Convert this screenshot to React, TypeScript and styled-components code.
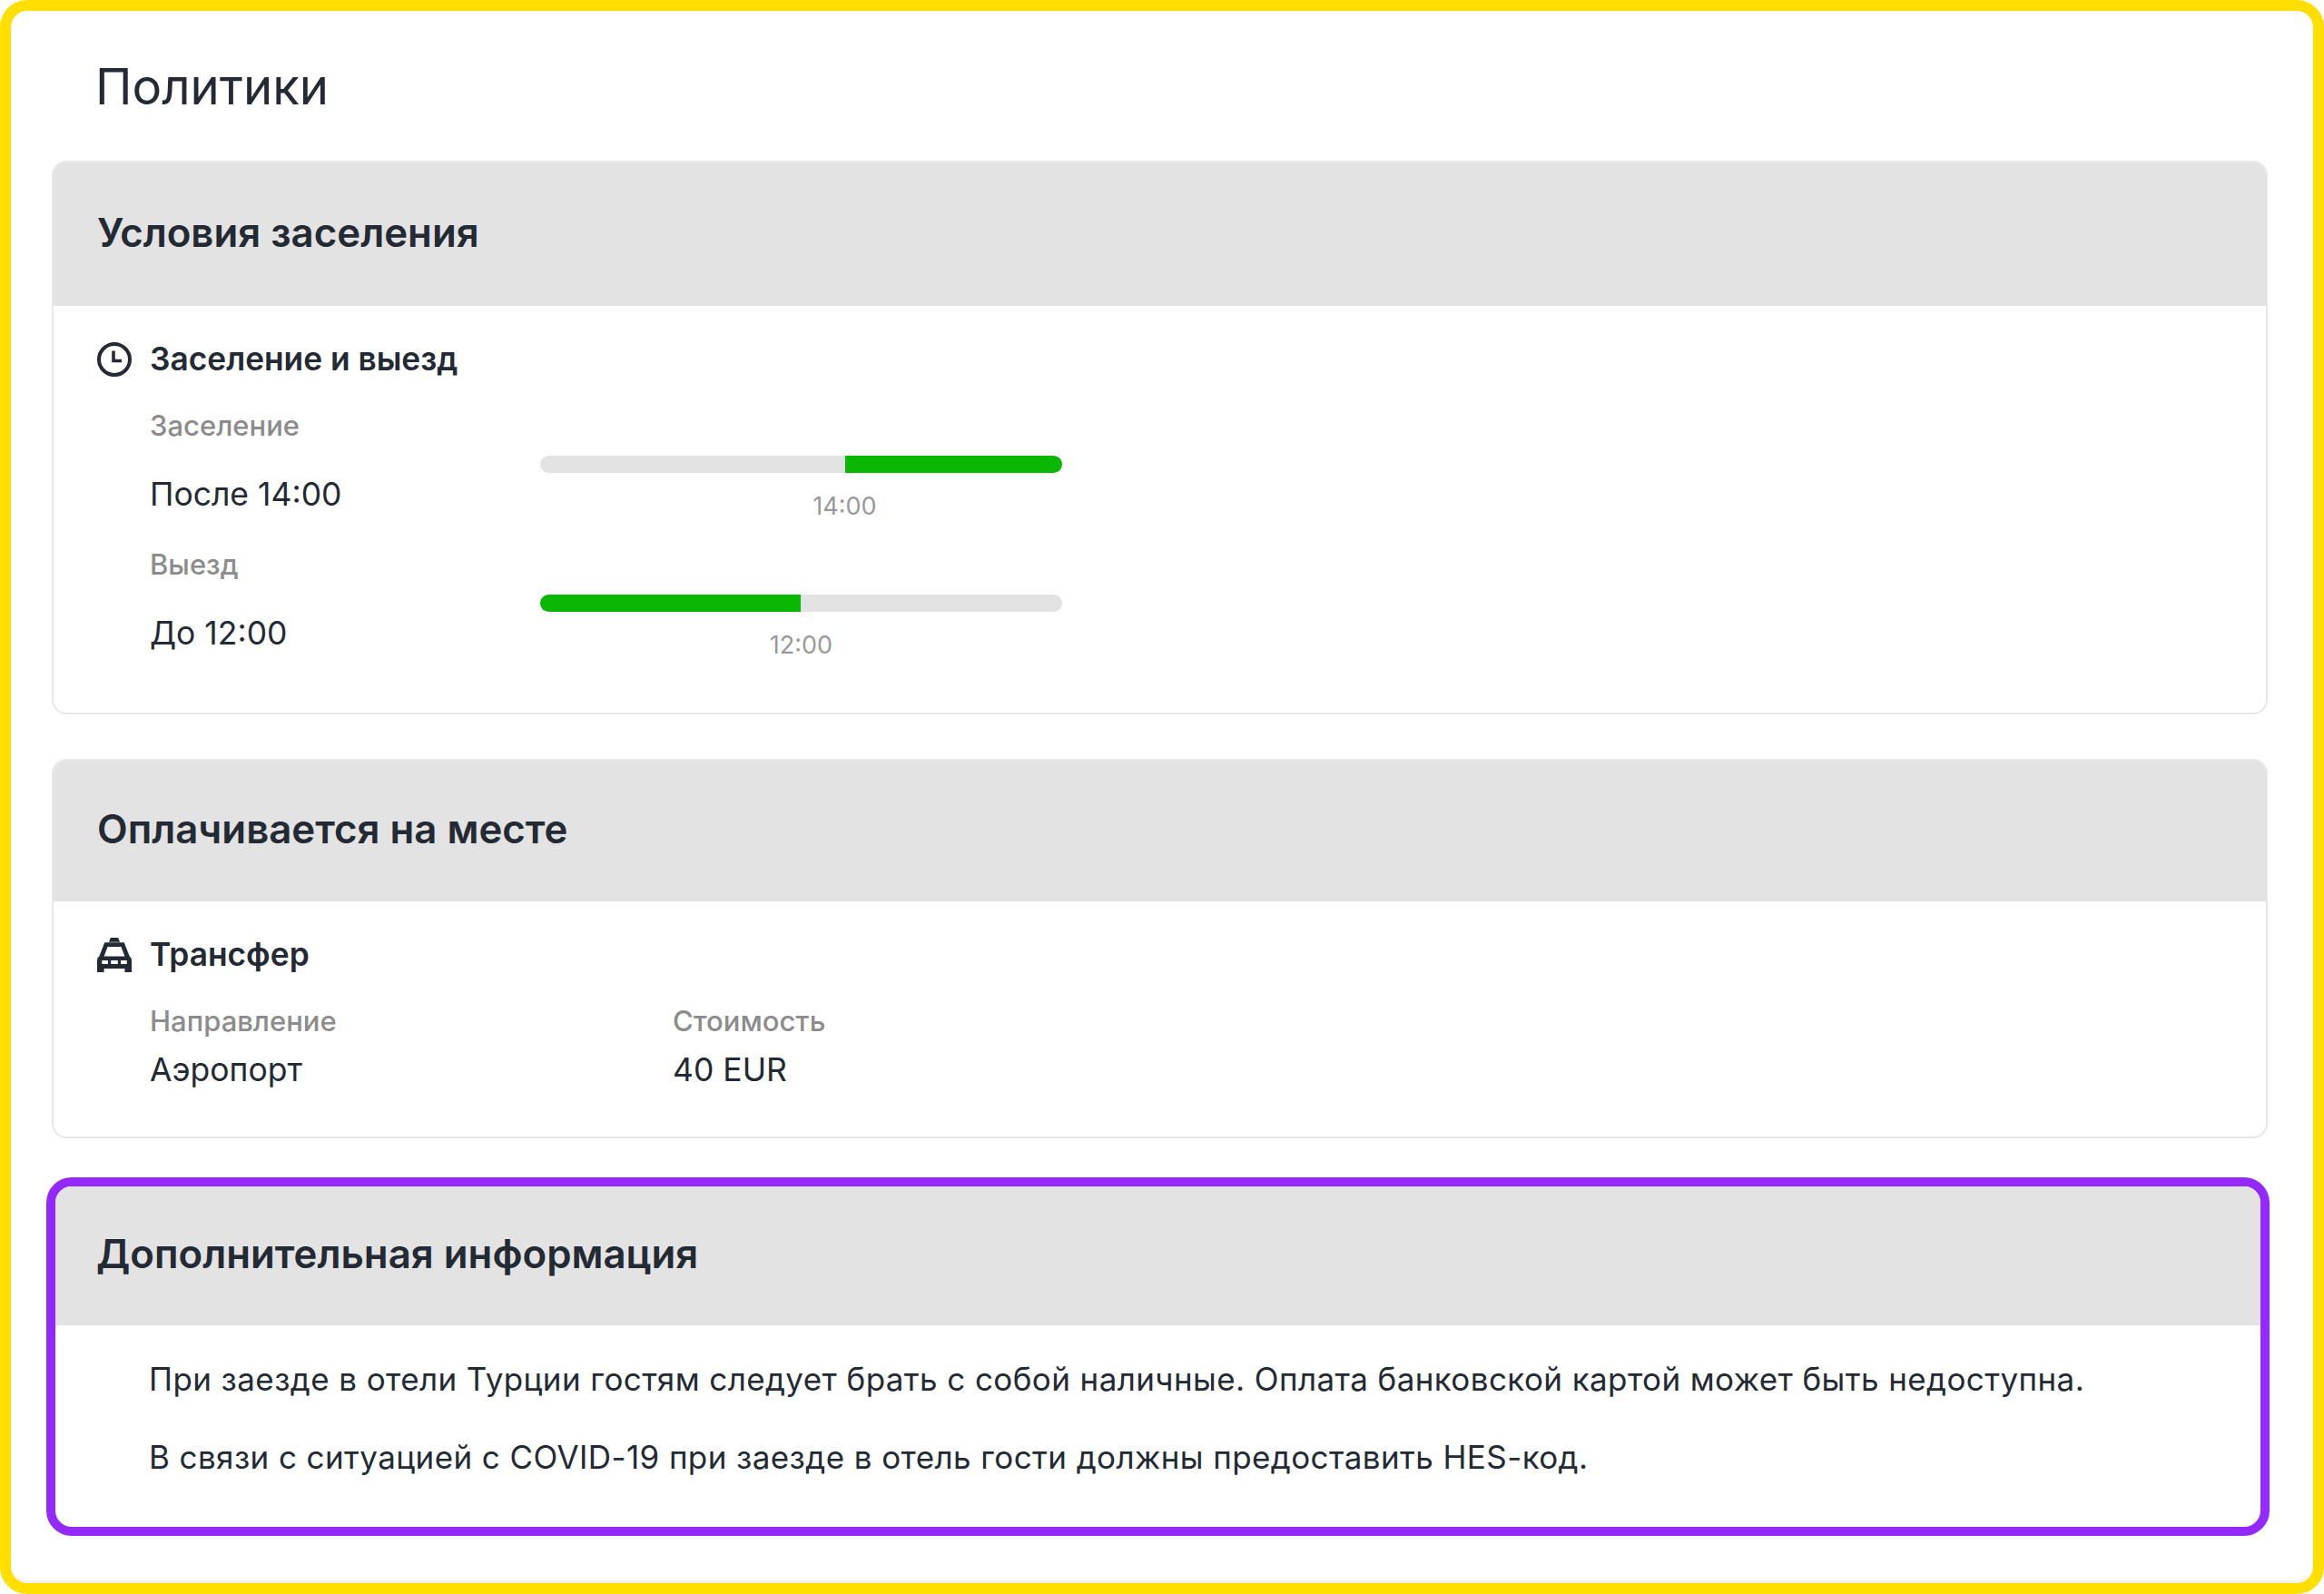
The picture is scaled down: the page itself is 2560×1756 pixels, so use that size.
import React from 'react';
import styled, { createGlobalStyle } from 'styled-components';

const GlobalStyle = createGlobalStyle`
  html, body {
    margin: 0;
    padding: 0;
    background: #fff;
  }
  * {
    box-sizing: border-box;
  }
`;

const Frame = styled.div`
  width: 2560px;
  height: 1756px;
  padding: 53px 50px 0 45px;
  border: 12px solid #ffde00;
  border-radius: 30px;
  background: #fff;
  box-shadow: inset 0 -5px 4px -2px #eeeeee;
  font-family: Inter, "Noto Sans", sans-serif;
  color: #242a33;
`;

const PageTitle = styled.h1`
  margin: 0 0 52px 48px;
  font-size: 54.5px;
  line-height: 60px;
  font-weight: 400;
`;

const Card = styled.section<{ $height: number; $gap: number }>`
  height: ${(p) => p.$height}px;
  margin-bottom: ${(p) => p.$gap}px;
  border: 2px solid #e8e8e8;
  border-radius: 16px;
  overflow: hidden;
`;

const HighlightCard = styled.section`
  height: 395px;
  margin: 0 -2px 0 -6px;
  border: 10px solid #9429ff;
  border-radius: 28px;
  overflow: hidden;
`;

const CardHeader = styled.div<{ $height: number; $pad: number }>`
  display: flex;
  align-items: center;
  height: ${(p) => p.$height}px;
  padding-bottom: 3px;
  padding-left: ${(p) => p.$pad}px;
  background: #e3e3e3;
`;

const CardTitle = styled.h2`
  margin: 0;
  font-size: 43.8px;
  line-height: 52px;
  font-weight: 600;
`;

const CardBody = styled.div`
  padding: 38px 48px 0;
`;

const SectionHead = styled.div`
  display: flex;
  align-items: center;
  gap: 20px;
  height: 42px;
  margin-bottom: 34px;
`;

const SectionTitle = styled.h3`
  margin: 0;
  font-size: 35.3px;
  line-height: 42px;
  font-weight: 600;
`;

const Details = styled.div`
  padding-left: 58px;
`;

const TimeRow = styled.div`
  display: grid;
  grid-template-columns: 430px 575px;
  height: 153px;
`;

const Label = styled.div`
  font-size: 31px;
  line-height: 36px;
  font-weight: 500;
  color: #8c8c8c;
`;

const Value = styled.div<{ $top: number }>`
  margin-top: ${(p) => p.$top}px;
  font-size: 35.5px;
  line-height: 44px;
  font-weight: 400;
`;

const BarColumn = styled.div`
  padding-top: 51px;
`;

const Track = styled.div<{ $flip?: boolean }>`
  display: flex;
  justify-content: ${(p) => (p.$flip ? 'flex-end' : 'flex-start')};
  height: 19px;
  border-radius: 10px;
  background: #e3e3e3;
  overflow: hidden;
`;

const Fill = styled.div`
  height: 100%;
  background: #0ab804;
`;

const TimeMark = styled.div`
  margin-top: 20px;
  font-size: 27px;
  line-height: 34px;
  color: #999999;
  text-align: center;
`;

const TransferGrid = styled.div`
  display: grid;
  grid-template-columns: 576px auto;
  padding-left: 58px;
`;

const Note = styled.p`
  margin: 0 0 42px;
  padding-left: 8px;
  font-size: 35px;
  line-height: 44px;
  letter-spacing: 0.4px;
`;

const NoteBody = styled.div`
  padding: 37px 95px 0;
`;

const ClockIcon = () => (
  <svg width="38" height="38" viewBox="0 0 38 38" fill="none">
    <circle cx="19" cy="19" r="17" stroke="#242a33" strokeWidth="4" />
    <path d="M18 9.5V20.5H27" stroke="#242a33" strokeWidth="3.6" />
  </svg>
);

const TaxiIcon = () => (
  <svg width="38" height="38" viewBox="0 0 115 115">
    <path d="M45 0H70L76 14H39Z" fill="#242a33" />
    <path
      fillRule="evenodd"
      fill="#242a33"
      d="M25 16H90L108 62Q115 66 115 75V115H92V103H23V115H0V75Q0 66 7 62ZM35 30H80L92 62H23ZM16 76H36V88H16ZM46 76H69V88H46ZM79 76H99V88H79Z"
    />
  </svg>
);

export default function App() {
  return (
    <Frame>
      <GlobalStyle />
      <PageTitle>Политики</PageTitle>

      <Card $height={610} $gap={49}>
        <CardHeader $height={158} $pad={48}>
          <CardTitle>Условия заселения</CardTitle>
        </CardHeader>
        <CardBody>
          <SectionHead>
            <ClockIcon />
            <SectionTitle>Заселение и выезд</SectionTitle>
          </SectionHead>
          <Details>
            <TimeRow>
              <div>
                <Label>Заселение</Label>
                <Value $top={36}>После 14:00</Value>
              </div>
              <BarColumn>
                <Track $flip>
                  <Fill style={{ width: `${(239 / 575) * 100}%` }} />
                </Track>
                <TimeMark style={{ transform: 'translateX(48px)' }}>14:00</TimeMark>
              </BarColumn>
            </TimeRow>
            <TimeRow>
              <div>
                <Label>Выезд</Label>
                <Value $top={36}>До 12:00</Value>
              </div>
              <BarColumn>
                <Track>
                  <Fill style={{ width: `${(287 / 575) * 100}%` }} />
                </Track>
                <TimeMark>12:00</TimeMark>
              </BarColumn>
            </TimeRow>
          </Details>
        </CardBody>
      </Card>

      <Card $height={418} $gap={43}>
        <CardHeader $height={155} $pad={48}>
          <CardTitle>Оплачивается на месте</CardTitle>
        </CardHeader>
        <CardBody>
          <SectionHead>
            <TaxiIcon />
            <SectionTitle>Трансфер</SectionTitle>
          </SectionHead>
          <TransferGrid>
            <div>
              <Label>Направление</Label>
              <Value $top={14}>Аэропорт</Value>
            </div>
            <div>
              <Label>Стоимость</Label>
              <Value $top={14}>40 EUR</Value>
            </div>
          </TransferGrid>
        </CardBody>
      </Card>

      <HighlightCard>
        <CardHeader $height={153} $pad={45}>
          <CardTitle>Дополнительная информация</CardTitle>
        </CardHeader>
        <NoteBody>
          <Note>При заезде в отели Турции гостям следует брать с собой наличные. Оплата банковской картой может быть недоступна.</Note>
          <Note>В связи с ситуацией с COVID-19 при заезде в отель гости должны предоставить HES-код.</Note>
        </NoteBody>
      </HighlightCard>
    </Frame>
  );
}
